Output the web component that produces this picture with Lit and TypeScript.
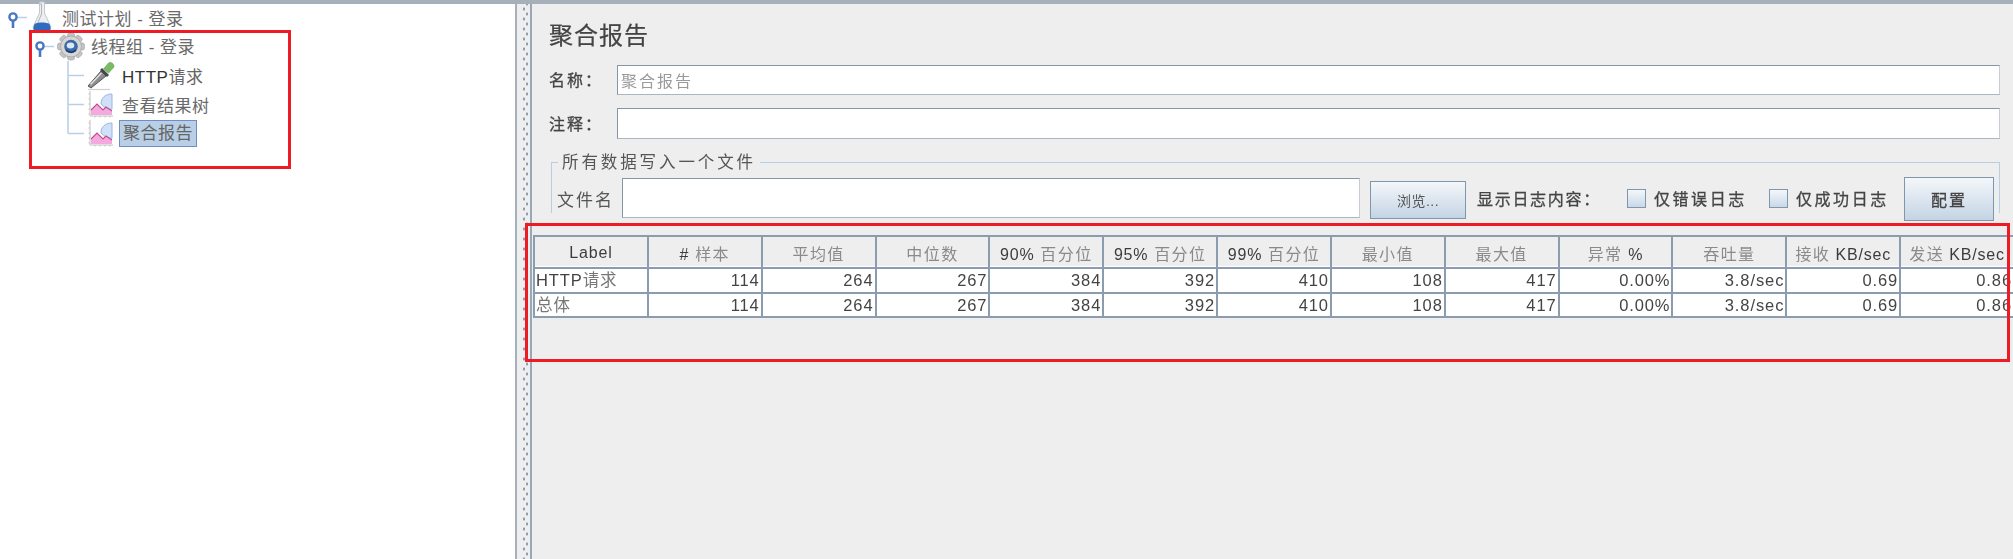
import { LitElement, html, css, svg } from "lit";
import { customElement } from "lit/decorators.js";

const HEADERS: [string, string, string][] = [
  ["Label", "", ""], ["#", " 样本", ""], ["", "平均值", ""], ["", "中位数", ""],
  ["90%", " 百分位", ""], ["95%", " 百分位", ""], ["99%", " 百分位", ""],
  ["", "最小值", ""], ["", "最大值", ""], ["", "异常 ", "%"], ["", "吞吐量", ""],
  ["", "接收", " KB/sec"], ["", "发送", " KB/sec"],
];
const VALUES = ["114", "264", "267", "384", "392", "410", "108", "417", "0.00%", "3.8/sec", "0.69", "0.86"];

const handle = svg`<svg class="handle" width="24" height="29" viewBox="0 0 24 29">
  <path d="M12 14.5H22" stroke="#b8cfe5" stroke-width="1.5"/>
  <path d="M8 17V25" stroke="#4a78c0" stroke-width="2.6"/>
  <circle cx="8" cy="14" r="3.6" fill="#fff" stroke="#4a78c0" stroke-width="2.4"/>
</svg>`;

const flask = svg`<svg class="ic flask" width="20" height="32" viewBox="0 0 20 32">
  <path d="M7.5 1h5v11l6 13c1 3-1 5-3 5H4.500c-2 0-4-2-3-5l6-13z" fill="#eceef1" stroke="#c3c7cc"/>
  <path d="M7.500 3h2v10l-5 12" fill="none" stroke="#b0b5bb" stroke-width="1"/>
  <path d="M2.500 23c3-2 12-2 15 0l1 3c.5 2-1 5-3 5H4.500c-2 0-3.500-3-3-5z" fill="#2f6cc0"/>
</svg>`;

const gearTeeth = Array.from({ length: 8 }, (_, i) => i * 45);
const gear = svg`<svg class="ic" width="28" height="29" viewBox="0 0 28 28">
  ${gearTeeth.map((a) => svg`<rect x="10.500" y="0.500" width="7" height="7" rx="2" fill="#c4c4c4" stroke="#a0a0a0" stroke-width=".6" transform="rotate(${a} 14 14)"/>`)}
  <circle cx="14" cy="14" r="10.500" fill="#d6d6d6" stroke="#acacac"/>
  <circle cx="14" cy="14" r="6.800" fill="#3a6aa8"/>
  <ellipse cx="13.500" cy="13" rx="3.800" ry="3" fill="#dce8f4"/>
  <path d="M9 17.500c3 3 7 3 10 0" fill="none" stroke="#16386a" stroke-width="1.400"/>
</svg>`;

const dropper = svg`<svg class="ic dropper" width="30" height="29" viewBox="0 0 30 29">
  <path d="M2 25L15 10l5 5L5 27z" fill="#8c8e90" stroke="#4a4c4e" stroke-width=".9"/>
  <path d="M4.500 23.500L15.500 12" stroke="#e2e2e2" stroke-width="1.400"/>
  <path d="M14 9l7 7 2-2-7-7z" fill="#45484a"/>
  <path d="M17.500 8l5-6c2-1.500 6 .5 5.500 4l-5.500 6z" fill="#7cbb66" stroke="#659f52" stroke-width=".6"/>
  <path d="M2 28.500H24" stroke="#cfcfcf" stroke-width="1.200"/>
</svg>`;

const chart = svg`<svg class="ic" width="26" height="29" viewBox="0 0 26 29">
  <path d="M2 1V26H25M0.500 4H2M0.500 9H2M0.500 14H2M0.500 19H2M0.500 24H2M7 27.500V26M12 27.500V26M17 27.500V26M22 27.500V26" fill="none" stroke="#c0c0c0" stroke-width="1"/>
  <path d="M13 14c0-6 4-10 11-10v15c-4 1-8-2-11-5z" fill="#cfe0f7" stroke="#94b6e4" stroke-width="1"/>
  <path d="M3 25v-5l6-6 6 6 3-3 6 4v4z" fill="#f4a9df"/>
  <path d="M3 20l6-6 6 6 3-3 6 4" fill="none" stroke="#c04a8e" stroke-width="1.100"/>
</svg>`;

const conn = (last: boolean) => svg`<svg class="conn" width="20" height="29" viewBox="0 0 20 29">
  <path d="M1 0V${last ? 14.5 : 29}M1 14.5H17" fill="none" stroke="#b8cfe5" stroke-width="1.5"/>
</svg>`;

@customElement("app-root")
export class AppRoot extends LitElement {
  static styles = css`
    :host { display: block; width: 2013px; height: 559px; overflow: hidden; position: relative; background: #eee;
      font-family: "Liberation Sans", "Noto Sans CJK SC", sans-serif; color: #3c3c3c; font-size: 17px; }
    .page { display: flex; width: 2013px; height: 559px; box-sizing: border-box; border-top: 4px solid #a5b0ba; filter: blur(.45px); }
    .tree { width: 515px; flex: none; background: #fff; box-sizing: border-box; }
    .row { display: flex; align-items: center; height: 29px; white-space: nowrap; letter-spacing: .5px; }
    .r0 { padding-left: 5px; margin-top: -1.3px; }
    .r1 { padding-left: 32px; }
    .r2 { padding-left: 67px; }
    .handle, .conn, .ic { flex: none; overflow: visible; display: block; }
    .r0 .handle { margin-right: 3px; }
    .r1 .handle { margin-right: 1px; }
    .conn { margin-right: 1px; }
    .dropper { margin-left: -2px; }
    .txt { margin-left: 8px; color: #6a6a6a; }
    .r0 .txt { margin-left: 10px; }
    .r1 .txt { margin-left: 6px; position: relative; top: -1px; }
    .dropper + .txt { margin-left: 6px; }
    .dark { color: #333; }
    .cjk { color: #666; }
    .sel { margin-left: 5px; padding: 0 3px; height: 25px; line-height: 25px; background: #b8cfe5; border: 1px solid #6f8fc4; color: #666; display: block; }
    .divider { width: 17px; flex: none; box-sizing: border-box; border-left: 2px solid #a4b1bd; border-right: 2px solid #98a8b7; background-color: #eee;
      background-image: radial-gradient(#909ca8 .9px, transparent 1.1px), radial-gradient(#909ca8 .9px, transparent 1.1px);
      background-size: 6px 10px; background-position: 4px 0, 7px 5px; background-repeat: repeat-y; }
    .main { flex: 1; min-width: 0; position: relative; overflow: hidden; }
    .form { box-sizing: border-box; padding: 12px 13px 0 17px; height: 228px; }
    h1 { margin: 0; font-size: 24px; font-weight: 400; line-height: 40px; height: 40px; color: #444; letter-spacing: 1px; -webkit-text-stroke: .2px #444; }
    .field { display: flex; align-items: center; margin-top: 9px; height: 30px; }
    .field + .field { margin-top: 13px; height: 31px; }
    .flabel { width: 68px; flex: none; font-size: 16px; color: #444; letter-spacing: 2px; -webkit-text-stroke: .3px #444; position: relative; top: -1px; }
    .input { box-sizing: border-box; flex: 1; height: 100%; background: #fff; border: 1.5px solid #8496a8; border-right-color: #c5ced6; border-bottom-color: #aab6c2;
      padding-left: 3px; display: flex; align-items: center; color: #9a9a9a; font-size: 16px; letter-spacing: 2px; }
    fieldset { margin: 13px 0 0 2px; padding: 5px 3px 0 5px; border: 1px solid #b6cee6; border-bottom: 0; height: 61px; min-width: 0; box-sizing: border-box; }
    legend { padding: 0 4px; margin-left: 1px; font-size: 16.5px; line-height: 20px; color: #555; letter-spacing: 2.9px; }
    .frow { display: flex; align-items: center; height: 42px; }
    .fname { width: 65px; flex: none; font-size: 17px; color: #555; letter-spacing: 2px; }
    .finput { width: 738px; height: 40px; flex: none; box-sizing: border-box; background: #fff; border: 1.5px solid #8496a8; border-right-color: #c5ced6; border-bottom-color: #aab6c2; }
    .btn { flex: none; box-sizing: border-box; display: flex; align-items: center; justify-content: center; border: 1.5px solid #7f96ac;
      background: linear-gradient(#f4f7fa, #c4d4e4); color: #555; }
    .browse { width: 96px; height: 38px; margin: 4px 0 0 10px; font-size: 14px; letter-spacing: .5px; }
    .t { margin: 0 4px 0 11px; font-size: 16px; letter-spacing: 1.7px; color: #444; white-space: nowrap; -webkit-text-stroke: .3px #444; }
    .cb { width: 19px; height: 19px; flex: none; box-sizing: border-box; border: 1.5px solid #7f96ac; background: linear-gradient(#f4f7fa, #c9d8e7); margin-left: 22px; margin-right: 8px; }
    .cbl { width: 93px; flex: none; font-size: 16px; letter-spacing: 2.6px; color: #444; white-space: nowrap; -webkit-text-stroke: .3px #444; }
    .config { width: 90px; height: 44px; margin: 2px 0 0 15px; font-size: 16px; letter-spacing: 2px; color: #444; -webkit-text-stroke: .3px #444; }
    table { border-collapse: collapse; table-layout: fixed; width: 1480px; margin: 3px 0 0 1px; background: #fff; }
    col { width: 113.850px; }
    th, td { border: 2px solid #8b9cae; overflow: hidden; white-space: nowrap; }
    th { height: 28px; padding: 2px 0 0; background: #eee; font-weight: 400; text-align: center; font-size: 16px; color: #3c3c3c; letter-spacing: .8px; box-shadow: inset 0 -1px 0 #fff; }
    th .c { color: #8a8a8a; letter-spacing: 1.4px; }
    td { height: 22.500px; text-align: right; padding: 0 1px 0 0; font-size: 16.500px; color: #444; letter-spacing: .9px; line-height: 22px; }
    td.l { text-align: left; padding: 0 0 0 1px; }
    td .c { color: #777; }
    .mark { position: absolute; box-sizing: border-box; border: 3px solid #ed1c24; pointer-events: none; }
    .m1 { left: 29px; top: 30px; width: 262px; height: 139px; }
    .m2 { left: 525px; top: 223px; width: 1485px; height: 139px; }
  `;

  render() {
    return html`
      <div class="page">
        <div class="tree">
          <div class="row r0">${handle}${flask}<span class="txt">测试计划 - 登录</span></div>
          <div class="row r1">${handle}${gear}<span class="txt">线程组 - 登录</span></div>
          <div class="row r2">${conn(false)}${dropper}<span class="txt dark">HTTP<span class="cjk">请求</span></span></div>
          <div class="row r2">${conn(false)}${chart}<span class="txt">查看结果树</span></div>
          <div class="row r2">${conn(true)}${chart}<span class="sel">聚合报告</span></div>
        </div>
        <div class="divider"></div>
        <div class="main">
          <div class="form">
            <h1>聚合报告</h1>
            <div class="field"><span class="flabel">名称：</span><div class="input">聚合报告</div></div>
            <div class="field"><span class="flabel">注释：</span><div class="input"></div></div>
            <fieldset>
              <legend>所有数据写入一个文件</legend>
              <div class="frow">
                <span class="fname">文件名</span>
                <div class="finput"></div>
                <div class="btn browse">浏览...</div>
                <span class="t">显示日志内容：</span>
                <span class="cb"></span><span class="cbl">仅错误日志</span>
                <span class="cb"></span><span class="cbl">仅成功日志</span>
                <div class="btn config">配置</div>
              </div>
            </fieldset>
          </div>
          <table>
            <colgroup>${HEADERS.map(() => html`<col />`)}</colgroup>
            <thead>
              <tr>${HEADERS.map(([a, b, d]) => html`<th>${a}<span class="c">${b}</span>${d}</th>`)}</tr>
            </thead>
            <tbody>
              <tr><td class="l">HTTP<span class="c">请求</span></td>${VALUES.map((v) => html`<td>${v}</td>`)}</tr>
              <tr><td class="l"><span class="c">总体</span></td>${VALUES.map((v) => html`<td>${v}</td>`)}</tr>
            </tbody>
          </table>
        </div>
      </div>
      <div class="mark m1"></div>
      <div class="mark m2"></div>
    `;
  }
}
